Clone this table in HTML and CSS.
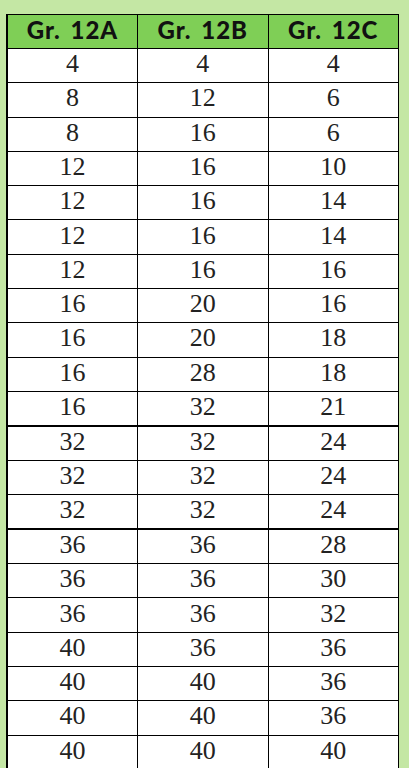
FILE: index.html
```html
<!DOCTYPE html>
<html>
<head>
<meta charset="utf-8">
<link rel="stylesheet" href="styles.css">
</head>
<body>
<table class="grades">
<thead>
<tr><th>Gr. 12A</th><th>Gr. 12B</th><th>Gr. 12C</th></tr>
</thead>
<tbody>
<tr><td>4</td><td>4</td><td>4</td></tr>
<tr><td>8</td><td>12</td><td>6</td></tr>
<tr><td>8</td><td>16</td><td>6</td></tr>
<tr><td>12</td><td>16</td><td>10</td></tr>
<tr><td>12</td><td>16</td><td>14</td></tr>
<tr><td>12</td><td>16</td><td>14</td></tr>
<tr><td>12</td><td>16</td><td>16</td></tr>
<tr><td>16</td><td>20</td><td>16</td></tr>
<tr><td>16</td><td>20</td><td>18</td></tr>
<tr><td>16</td><td>28</td><td>18</td></tr>
<tr class="sep"><td>16</td><td>32</td><td>21</td></tr>
<tr><td>32</td><td>32</td><td>24</td></tr>
<tr><td>32</td><td>32</td><td>24</td></tr>
<tr class="sep"><td>32</td><td>32</td><td>24</td></tr>
<tr><td>36</td><td>36</td><td>28</td></tr>
<tr><td>36</td><td>36</td><td>30</td></tr>
<tr><td>36</td><td>36</td><td>32</td></tr>
<tr><td>40</td><td>36</td><td>36</td></tr>
<tr><td>40</td><td>40</td><td>36</td></tr>
<tr><td>40</td><td>40</td><td>36</td></tr>
<tr><td>40</td><td>40</td><td>40</td></tr>
</tbody>
</table>
</body>
</html>
```
FILE: styles.css
```css
html, body {
  margin: 0;
  background: #c4e7a4;
}
body {
  padding: 14px 0 0 6px;
  height: 768px;
  overflow: hidden;
  box-sizing: border-box;
}
.grades {
  border-collapse: collapse;
  table-layout: fixed;
  width: 393px;
  background: #ffffff;
  border-left: 2px solid #000;
}
.grades th, .grades td {
  border: 1px solid #000;
  padding: 0 0 3px 0;
  text-align: center;
  overflow: hidden;
}
.grades th:first-child, .grades td:first-child {
  border-left: 2px solid #000;
}
.grades thead tr {
  height: 34px;
}
.grades th {
  background: #7fcf56;
  font-family: "Lato", "Open Sans", sans-serif;
  font-weight: 900;
  font-size: 24px;
  letter-spacing: 1px;
  word-spacing: 3px;
  color: #111;
  line-height: 30px;
}
.grades tbody tr {
  height: 34.29px;
}
.grades td {
  font-family: "Liberation Serif", "DejaVu Serif", serif;
  font-size: 26px;
  line-height: 30px;
  color: #222;
}
.grades tr.sep td {
  border-bottom: 2px solid #000;
}
```
